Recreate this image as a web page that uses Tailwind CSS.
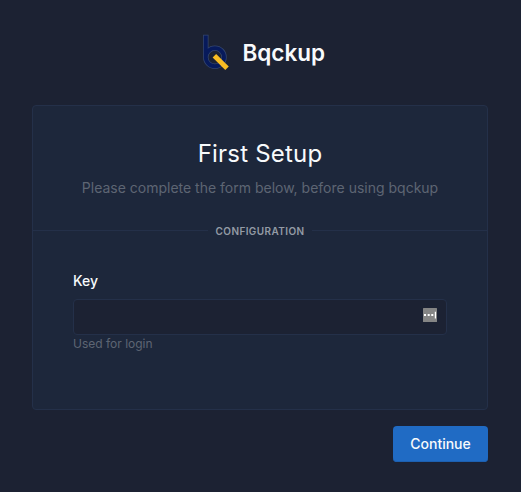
<!DOCTYPE html>
<html lang="en">
<head>
<meta charset="utf-8">
<title>Bqckup</title>
<script src="https://cdn.jsdelivr.net/npm/@tailwindcss/browser@4"></script>
</head>
<body class="h-[492px] overflow-hidden bg-[#1c2233] font-[Inter,sans-serif] text-[14px] leading-5 text-[#f8fafc]">
<main class="flex flex-col pr-[33px] pl-8">
  <header class="flex h-[105px] items-start pt-[33px] pl-[169px]">
    <svg class="h-10 w-8 shrink-0" viewBox="0 0 32 40" fill="none">
      <path d="M4.8 1.8V24.2M4.8 24.2A9.1 9.1 0 1 0 23 24.2A9.1 9.1 0 1 0 4.8 24.2" stroke="#34466f" stroke-width="5.4"/>
      <path d="M4.8 2.6V24.2M4.8 24.2A9.1 9.1 0 1 0 23 24.2A9.1 9.1 0 1 0 4.8 24.2" stroke="#071a5b" stroke-width="3.9"/>
      <path d="M13.4 22.8L26 35.2" stroke="#f9bd23" stroke-width="5"/>
    </svg>
    <h1 class="ml-[9.5px] pt-1 text-[22.5px] leading-8 font-semibold">Bqckup</h1>
  </header>
  <form class="flex flex-col">
    <section class="h-[305px] rounded border border-[#243049] bg-[#1d273b]">
      <div class="pt-8 text-center">
        <h2 class="text-[24px] leading-8 font-normal tracking-[0.2px]">First Setup</h2>
        <p class="mt-2 text-[14px] leading-5 text-[#5d6573]">Please complete the form below, before using bqckup</p>
      </div>
      <div class="mt-[26px] mb-px flex h-3 items-center gap-2 text-[10px] leading-3 font-semibold tracking-[0.4px] text-[#939ba5]">
        <span class="h-px flex-1 bg-[#243049]"></span>
        <span class="pt-px">CONFIGURATION</span>
        <span class="h-px flex-1 bg-[#243049]"></span>
      </div>
      <div class="px-10 pt-[34px]">
        <label for="key" class="block text-[14px] leading-5 font-medium">Key</label>
        <div class="mt-2 flex h-9 items-center justify-end rounded border border-[#243049] bg-[#1c2233] pr-[9px]">
          <input id="key" class="min-w-0 flex-1 bg-transparent px-3 outline-none">
          <svg class="mb-1 h-[14px] w-[14px]" viewBox="0 0 14 14">
            <rect width="14" height="14" rx="0.5" fill="#858585"/>
            <path d="M1 6h2v2H1zM4.7 6h2v2h-2zM8.3 6h2v2h-2zM11.8 3.7H13v6.8h-1.2z" fill="#fff"/>
          </svg>
        </div>
        <p class="text-[12px] leading-[17px] text-[#5d6573]">Used for login</p>
      </div>
    </section>
    <button type="button" class="mt-4 h-9 w-[95px] self-end rounded bg-[#206bc4] text-[14px] leading-5 font-medium shadow-[inset_0_-1px_0_#1d60b0]">Continue</button>
  </form>
</main>
</body>
</html>
